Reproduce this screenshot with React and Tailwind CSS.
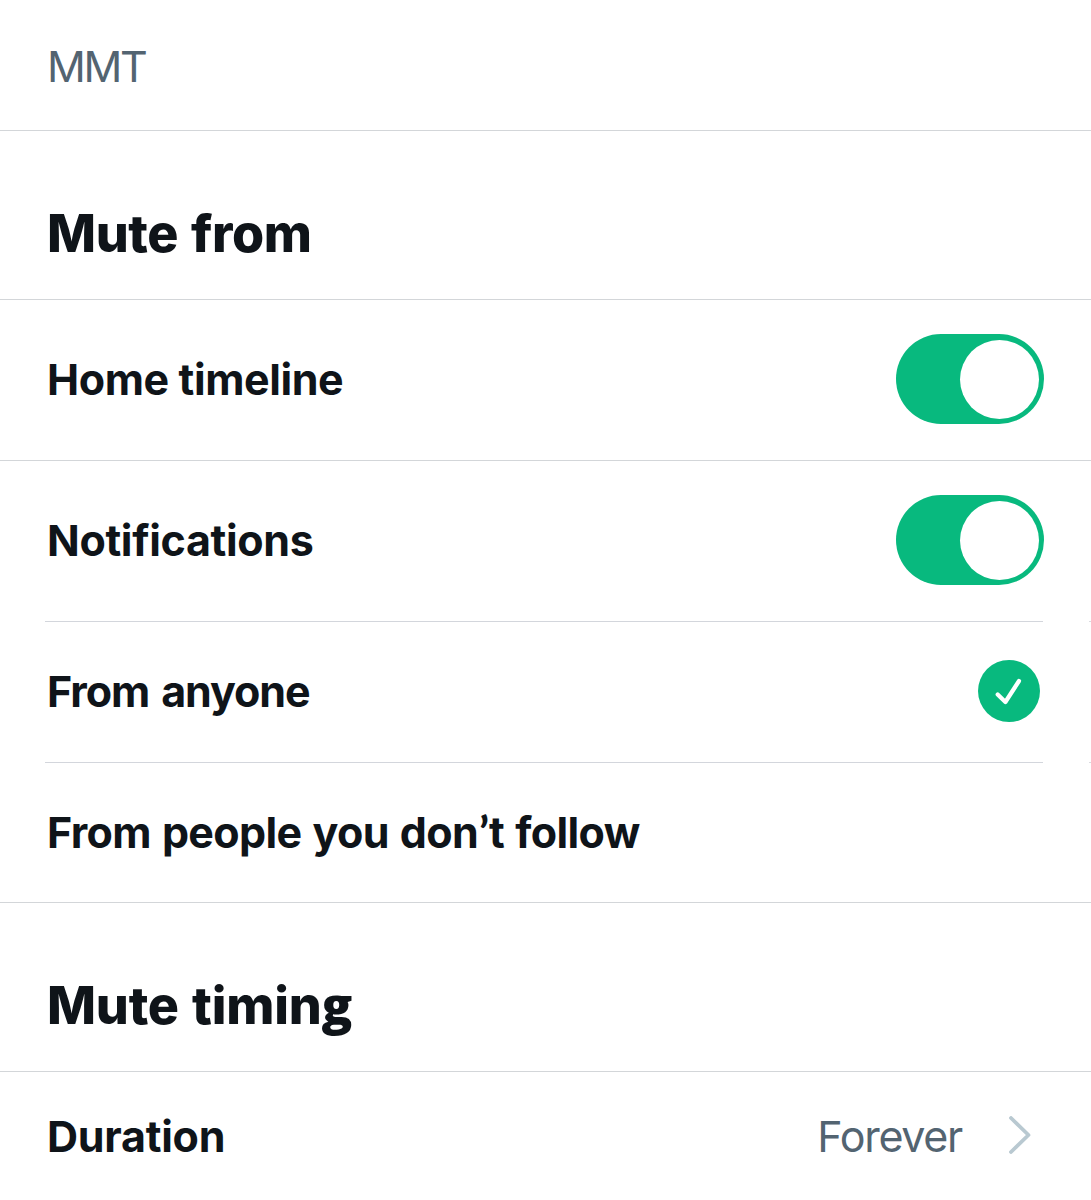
const label = "whitespace-nowrap font-[650] text-[#0f1419] text-[43px] leading-[60px]";

function Toggle() {
  return (
    <div className="flex h-[90px] w-[148px] shrink-0 items-center justify-end rounded-full bg-[#08b97e] pr-[5px]">
      <div className="size-[79px] rounded-full bg-white" />
    </div>
  );
}

function Heading({ children, className }) {
  return (
    <h2 className={"whitespace-nowrap border-b border-[#d3d6d9] pl-[47px] font-extrabold text-[#0f1419] text-[52px] leading-[70px] " + className}>
      {children}
    </h2>
  );
}

function InsetDivider() {
  return (
    <div className="flex h-px justify-between pl-[45px]">
      <div className="w-[998px] bg-[#d3d6dc]" />
      <div className="w-[2px] bg-[#d9dbe0]" />
    </div>
  );
}

export default function App() {
  return (
    <main className="h-[1200px] w-[1091px] overflow-hidden bg-white font-['Inter',sans-serif]">
      <div className="h-[131px] border-b border-[#d3d6d9] pl-[47px] pt-[36px] text-[43px] leading-[60px] text-[#536471]">
        <span className="tracking-[-2.4px]">MMT</span>
      </div>
      <Heading className="h-[169px] pt-[68px]"><span className="tracking-[-0.4px] [word-spacing:2px]">Mute from</span></Heading>
      <div className="flex h-[161px] items-center justify-between border-b border-[#d3d6d9] pb-[2px] pl-[47px] pr-[47px]">
        <span className={label + " tracking-[-0.4px]"}>Home timeline</span>
        <Toggle />
      </div>
      <div className="flex h-[160px] items-center justify-between pb-[2px] pl-[47px] pr-[47px]">
        <span className={label + " tracking-[-0.35px]"}>Notifications</span>
        <Toggle />
      </div>
      <InsetDivider />
      <div className="flex h-[140px] items-center justify-between pb-[2px] pl-[47px] pr-[51px]">
        <span className={label + " tracking-[-1.1px] [word-spacing:3px]"}>From anyone</span>
        <svg className="size-[62px]" viewBox="0 0 62 62" fill="none">
          <circle cx="31" cy="31" r="31" fill="#08b97e" />
          <path d="M19.7 34.5L27.4 42L41 21" stroke="white" strokeWidth="4.2" strokeLinecap="round" strokeLinejoin="round" />
        </svg>
      </div>
      <InsetDivider />
      <div className="flex h-[139px] items-center pb-[2px] pl-[47px]">
        <span className={label + " tracking-[-0.65px] [word-spacing:1.5px]"}>
          From people you don<span className="mx-px font-['Lato'] font-black">’</span>t follow
        </span>
      </div>
      <Heading className="h-[170px] border-t pt-[68px]">
        <span className="tracking-[-0.2px] [word-spacing:2px]">Mute timin<span className="font-['Open_Sans'] text-[51px] leading-none">g</span></span>
      </Heading>
      <div className="flex h-[128px] items-center justify-between pl-[47px] pr-[60px]">
        <span className={label + " tracking-[-0.25px]"}>Duration</span>
        <div className="flex items-center">
          <span className="text-[43px] leading-[60px] tracking-[-1.3px] text-[#536471]">Forever</span>
          <svg className="mb-[2px] ml-[47px] h-[38px] w-[22px]" viewBox="0 0 22 38" fill="none">
            <path d="M2 2L19.5 19L2 36" stroke="#b9c9d1" strokeWidth="3.8" strokeLinecap="round" strokeLinejoin="round" />
          </svg>
        </div>
      </div>
    </main>
  );
}
